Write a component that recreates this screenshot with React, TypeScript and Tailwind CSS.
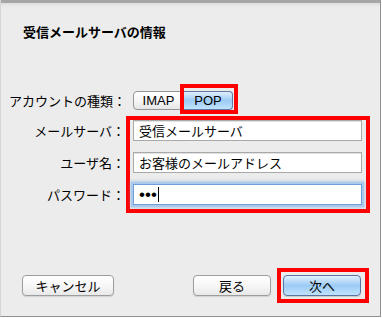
import type { ReactNode } from "react";

const jp = "font-['Noto_Sans_CJK_JP','Liberation_Sans',sans-serif]";

function AquaButton({
  children,
  width,
  primary = false,
}: {
  children: ReactNode;
  width: string;
  primary?: boolean;
}) {
  return (
    <button
      type="button"
      className={
        primary
          ? `${width} flex h-[21px] items-center justify-center rounded-[4px] border border-[#5b73a3] bg-gradient-to-b from-[#e2effd] via-[#9ccbf5] to-[#bfe3fc] text-[13px] leading-none text-black shadow-[0_1px_1px_rgba(0,0,0,0.15)]`
          : `${width} flex h-[21px] items-center justify-center rounded-[4px] border border-[#9d9d9d] bg-gradient-to-b from-white via-[#f7f7f7] to-[#e9e9e9] text-[13px] leading-none text-black shadow-[0_1px_1px_rgba(0,0,0,0.12)]`
      }
    >
      {children}
    </button>
  );
}

function Field({ value, focused = false }: { value: ReactNode; focused?: boolean }) {
  return (
    <div
      className={
        focused
          ? "flex h-[21px] w-[229px] items-center border border-[#6f9fd6] bg-white pl-[5px] text-[13px] leading-none text-black shadow-[0_0_0_2px_#a9c9ec,0_0_3px_3px_rgba(110,160,220,0.45)]"
          : "flex h-[21px] w-[229px] items-center border border-[#a9a9a9] bg-white pl-[5px] text-[13px] leading-none text-black shadow-[inset_0_1px_0_#e2e2e2]"
      }
    >
      {value}
    </div>
  );
}

export default function App() {
  return (
    <div className={`h-[318px] w-[382px] bg-white ${jp}`}>
      <div className="flex h-[317px] w-[381px] flex-col border-r border-b border-l border-[#8f8f8f] border-l-[#d6d6d6] bg-[#ececec]">
        <div className="h-[3px] bg-[#a6a6a6]" />
        <div className="h-[4px] bg-gradient-to-b from-[#dedede] to-[#ececec]" />

        <h1 className="mt-[17px] ml-[22px] text-[13px] leading-[16px] font-bold text-black">
          受信メールサーバの情報
        </h1>

        {/* account type */}
        <div className="mt-[51px] flex h-[19px] items-center">
          <span className="w-[125px] text-right text-[13px] leading-none text-black">
            アカウントの種類：
          </span>
          <div className="relative ml-[7px] flex h-[19px] font-['Liberation_Sans',sans-serif]">
            <div className="flex w-[51px] items-center justify-center rounded-l-[4px] border border-[#959595] bg-gradient-to-b from-white via-[#f6f6f6] to-[#e6e6e6] text-[13px] leading-none text-black">
              IMAP
            </div>
            <div className="flex w-[49px] items-center justify-center rounded-r-[4px] border border-l-0 border-[#6077a6] bg-gradient-to-b from-[#e2effd] via-[#9ccbf5] to-[#bfe3fc] text-[13px] leading-none text-black">
              POP
            </div>
            <div className="pointer-events-none absolute top-[-7px] left-[47px] h-[30px] w-[58px] border-[4px] border-[#ff0000]" />
          </div>
        </div>

        {/* server fields */}
        <div className="mt-[6px] flex">
          <div className="flex w-[125px] flex-col gap-[11px] pt-[4px] pr-[1px]">
            <span className="flex h-[21px] items-center justify-end text-[13px] leading-none text-black">
              メールサーバ：
            </span>
            <span className="flex h-[21px] items-center justify-end text-[13px] leading-none text-black">
              ユーザ名：
            </span>
            <span className="flex h-[21px] items-center justify-end text-[13px] leading-none text-black">
              パスワード：
            </span>
          </div>
          <div className="flex w-[244px] flex-col gap-[11px] border-[4px] border-[#ff0000] pt-0 pr-[4px] pb-[4px] pl-[3px]">
            <Field value="受信メールサーバ" />
            <Field value="お客様のメールアドレス" />
            <Field
              focused
              value={
                <span className="flex items-center">
                  <span className="font-['Liberation_Sans',sans-serif] text-[17px] leading-none">
                    •••
                  </span>
                  <span className="ml-[1px] h-[15px] w-[1px] bg-black" />
                </span>
              }
            />
          </div>
        </div>

        {/* buttons */}
        <div className="mt-auto mb-[13px] flex items-center">
          <div className="ml-[21px]">
            <AquaButton width="w-[92px]">キャンセル</AquaButton>
          </div>
          <div className="ml-auto">
            <AquaButton width="w-[78px]">戻る</AquaButton>
          </div>
          <div className="mr-[11px] ml-[6px] flex border-[4px] border-[#ff0000] py-[3px] pr-[4px] pl-[2px]">
            <AquaButton width="w-[78px]" primary>
              次へ
            </AquaButton>
          </div>
        </div>
      </div>
    </div>
  );
}
